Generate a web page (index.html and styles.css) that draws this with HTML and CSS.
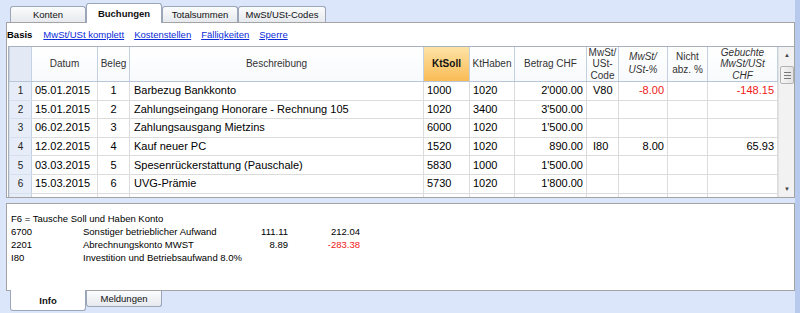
FILE: index.html
```html
<!DOCTYPE html>
<html>
  <head>
    <title>Buchungen</title>
    <link rel="stylesheet" href="styles.css">
  </head>
  <body>
    <div class="window">
      <div class="tabs tabs-top">
        <div class="tab">Konten</div>
        <div class="tab active">Buchungen</div>
        <div class="tab">Totalsummen</div>
        <div class="tab wide">MwSt/USt-Codes</div>
      </div>

      <div class="panel main-panel">
        <div class="views">
          <span class="view-current">Basis</span>
          <a href="#">MwSt/USt komplett</a>
          <a href="#">Kostenstellen</a>
          <a href="#">Fälligkeiten</a>
          <a href="#">Sperre</a>
        </div>

        <div class="grid-box">
          <table class="grid">
            <colgroup>
              <col class="c-nr">
              <col class="c-date">
              <col class="c-doc">
              <col class="c-desc">
              <col class="c-acc">
              <col class="c-acc2">
              <col class="c-amount">
              <col class="c-code">
              <col class="c-pct">
              <col class="c-nabz">
              <col class="c-vat">
            </colgroup>
            <thead>
              <tr>
                <th class="nr"><div class="hd"></div></th>
                <th><div class="hd">Datum</div></th>
                <th><div class="hd">Beleg</div></th>
                <th><div class="hd">Beschreibung</div></th>
                <th class="sorted"><div class="hd">KtSoll</div></th>
                <th><div class="hd">KtHaben</div></th>
                <th><div class="hd">Betrag CHF</div></th>
                <th><div class="hd three">MwSt/<br>USt-<br>Code</div></th>
                <th class="italic"><div class="hd">MwSt/<br>USt-%</div></th>
                <th><div class="hd">Nicht<br>abz. %</div></th>
                <th class="italic"><div class="hd three">Gebuchte<br>MwSt/USt<br>CHF</div></th>
              </tr>
            </thead>
            <tbody>
              <tr>
                <td class="nr">1</td>
                <td>05.01.2015</td>
                <td class="center">1</td>
                <td class="desc">Barbezug Bankkonto</td>
                <td>1000</td>
                <td>1020</td>
                <td class="num">2'000.00</td>
                <td class="code">V80</td>
                <td class="num neg">-8.00</td>
                <td></td>
                <td class="num neg">-148.15</td>
              </tr>
              <tr>
                <td class="nr">2</td>
                <td>15.01.2015</td>
                <td class="center">2</td>
                <td class="desc">Zahlungseingang Honorare - Rechnung 105</td>
                <td>1020</td>
                <td>3400</td>
                <td class="num">3'500.00</td>
                <td></td>
                <td></td>
                <td></td>
                <td></td>
              </tr>
              <tr>
                <td class="nr">3</td>
                <td>06.02.2015</td>
                <td class="center">3</td>
                <td class="desc">Zahlungsausgang Mietzins</td>
                <td>6000</td>
                <td>1020</td>
                <td class="num">1'500.00</td>
                <td></td>
                <td></td>
                <td></td>
                <td></td>
              </tr>
              <tr>
                <td class="nr">4</td>
                <td>12.02.2015</td>
                <td class="center">4</td>
                <td class="desc">Kauf neuer PC</td>
                <td>1520</td>
                <td>1020</td>
                <td class="num">890.00</td>
                <td class="code">I80</td>
                <td class="num">8.00</td>
                <td></td>
                <td class="num">65.93</td>
              </tr>
              <tr>
                <td class="nr">5</td>
                <td>03.03.2015</td>
                <td class="center">5</td>
                <td class="desc">Spesenrückerstattung (Pauschale)</td>
                <td>5830</td>
                <td>1000</td>
                <td class="num">1'500.00</td>
                <td></td>
                <td></td>
                <td></td>
                <td></td>
              </tr>
              <tr>
                <td class="nr">6</td>
                <td>15.03.2015</td>
                <td class="center">6</td>
                <td class="desc">UVG-Prämie</td>
                <td>5730</td>
                <td>1020</td>
                <td class="num">1'800.00</td>
                <td></td>
                <td></td>
                <td></td>
                <td></td>
              </tr>
              <tr>
                <td class="nr"></td>
                <td></td><td></td><td></td><td></td><td></td>
                <td></td><td></td><td></td><td></td><td></td>
              </tr>
            </tbody>
          </table>

          <div class="scrollbar">
            <div class="arrow">&#9650;</div>
            <div class="thumb"><span></span><span></span><span></span></div>
            <div class="track"></div>
            <div class="arrow">&#9660;</div>
          </div>
        </div>
      </div>

      <div class="panel info-panel">
        <div class="info-line">F6 = Tausche Soll und Haben Konto</div>
        <div class="info-row">
          <span>6700</span>
          <span>Sonstiger betrieblicher Aufwand</span>
          <span class="num">111.11</span>
          <span class="num">212.04</span>
        </div>
        <div class="info-row">
          <span>2201</span>
          <span>Abrechnungskonto MWST</span>
          <span class="num">8.89</span>
          <span class="num neg">-283.38</span>
        </div>
        <div class="info-row">
          <span>I80</span>
          <span class="span-rest">Investition und Betriebsaufwand 8.0%</span>
        </div>
      </div>

      <div class="tabs tabs-bottom">
        <div class="tab active">Info</div>
        <div class="tab">Meldungen</div>
      </div>
    </div>
  </body>
</html>
```

FILE: styles.css
```css
html,
body {
  margin: 0;
  padding: 0;
}

body {
  font-family: "Liberation Sans", Arial, sans-serif;
  color: #000;
  background: #dce6fa;
}

.window {
  width: 800px;
  height: 313px;
  box-sizing: border-box;
  border-right: 5px solid #b7caee;
  overflow: hidden;
}

/* tabs */

.tabs {
  display: flex;
  padding-left: 10px;
}

.tabs-top {
  height: 22px;
  align-items: flex-end;
}

.tab {
  width: 76px;
  box-sizing: border-box;
  height: 16px;
  border: 1px solid #9ba7b9;
  border-bottom: none;
  border-radius: 3px 3px 0 0;
  background: linear-gradient(#fbfcfd, #e6e9ee);
  font-size: 9.5px;
  line-height: 16px;
  text-align: center;
  color: #111;
}

.tab.wide {
  width: 88px;
}

.tabs-top .tab.active {
  height: 20px;
  margin-bottom: -1px;
  background: #fff;
  font-weight: bold;
  line-height: 19px;
  position: relative;
  z-index: 1;
}

.tabs-bottom {
  align-items: flex-start;
}

.tabs-bottom .tab {
  border-top: none;
  border-bottom: 1px solid #9ba7b9;
  border-radius: 0 0 3px 3px;
  height: 16px;
  line-height: 15px;
}

.tabs-bottom .tab.active {
  height: 21px;
  margin-top: -1px;
  background: #fff;
  font-weight: bold;
  line-height: 22px;
  position: relative;
  z-index: 1;
}

/* panels */

.panel {
  margin-left: 6px;
  width: 789px;
  box-sizing: border-box;
  border: 1px solid #a3a3a3;
  background: #fff;
}

.main-panel {
  height: 176px;
  padding-left: 1px;
  display: flex;
  flex-direction: column;
}

.views {
  height: 23px;
  display: flex;
  align-items: center;
  gap: 10px;
  font-size: 9.5px;
  margin-left: -1px;
}

.views a {
  color: #0a2bd8;
}

.view-current {
  font-weight: bold;
  margin-right: 1px;
}

.grid-box {
  flex: 1;
  display: flex;
  align-items: flex-start;
  border-top: 1px solid #a8b0bc;
  border-left: 1px solid #a8b0bc;
  overflow: hidden;
}

/* grid */

.grid {
  width: 768px;
  flex-shrink: 0;
  table-layout: fixed;
  border-collapse: collapse;
  font-size: 11px;
}

.c-nr { width: 22px; }
.c-date { width: 66px; }
.c-doc { width: 32px; }
.c-desc { width: 294px; }
.c-acc { width: 46px; }
.c-acc2 { width: 45px; }
.c-amount { width: 72px; }
.c-code { width: 32px; }
.c-pct { width: 49px; }
.c-nabz { width: 40px; }
.c-vat { width: 70px; }

.grid th {
  padding: 0;
  border: 1px solid #c4d1e3;
  border-top: none;
  border-bottom-color: #b9c6d9;
  font-weight: normal;
  font-size: 10px;
  color: #333;
  background: linear-gradient(#ffffff, #f7f9fc);
}

.grid th .hd {
  height: 34px;
  display: flex;
  align-items: center;
  justify-content: center;
  text-align: center;
  line-height: 12.7px;
  overflow: hidden;
  white-space: nowrap;
}

.grid th .hd.three {
  line-height: 11.6px;
}

.grid th.italic {
  font-style: italic;
}

.grid th.sorted {
  background: linear-gradient(#fde3a6, #f9bb55);
  font-weight: bold;
  color: #111;
}

.grid th.nr {
  background: #e3eaf6;
}

.grid tbody tr {
  height: 18.6px;
}

.grid td {
  padding: 0 3px;
  border: 1px solid #dcdcdc;
  line-height: 13px;
  white-space: nowrap;
  overflow: hidden;
}

.grid td.nr {
  background: #e7edf8;
  border-color: #d6dfec;
  border-right-color: #c4d1e3;
  text-align: center;
  font-size: 10px;
  color: #222;
}

.grid td.center {
  text-align: center;
}

.grid td.desc {
  padding-left: 4px;
}

.grid td.code {
  padding-left: 6px;
}

.num {
  text-align: right;
}

.neg {
  color: #f01818;
}

/* scrollbar */

.scrollbar {
  width: 17px;
  height: 100%;
  flex-shrink: 0;
  display: flex;
  flex-direction: column;
  background: #f2f2f2;
  border-left: 1px solid #e2e2e2;
  box-sizing: border-box;
}

.scrollbar .arrow {
  height: 16px;
  font-size: 6px;
  line-height: 16px;
  text-align: center;
  color: #444;
}

.scrollbar .thumb {
  margin: 3px 1px 0;
  height: 16px;
  border: 1px solid #b3b3b3;
  border-radius: 2px;
  background: linear-gradient(90deg, #f6f6f6, #e4e4e4);
  display: flex;
  flex-direction: column;
  justify-content: center;
  align-items: center;
  gap: 2px;
}

.scrollbar .thumb span {
  width: 7px;
  height: 1px;
  background: #7a7a7a;
}

.scrollbar .track {
  flex: 1;
}

/* info */

.info-panel {
  margin-top: 5px;
  height: 88px;
  padding: 8px 0 0 4px;
  font-size: 9.5px;
  line-height: 13px;
}

.info-row {
  display: grid;
  grid-template-columns: 72px 150px 55px 72px;
}

.info-row .span-rest {
  grid-column: span 3;
}
```
